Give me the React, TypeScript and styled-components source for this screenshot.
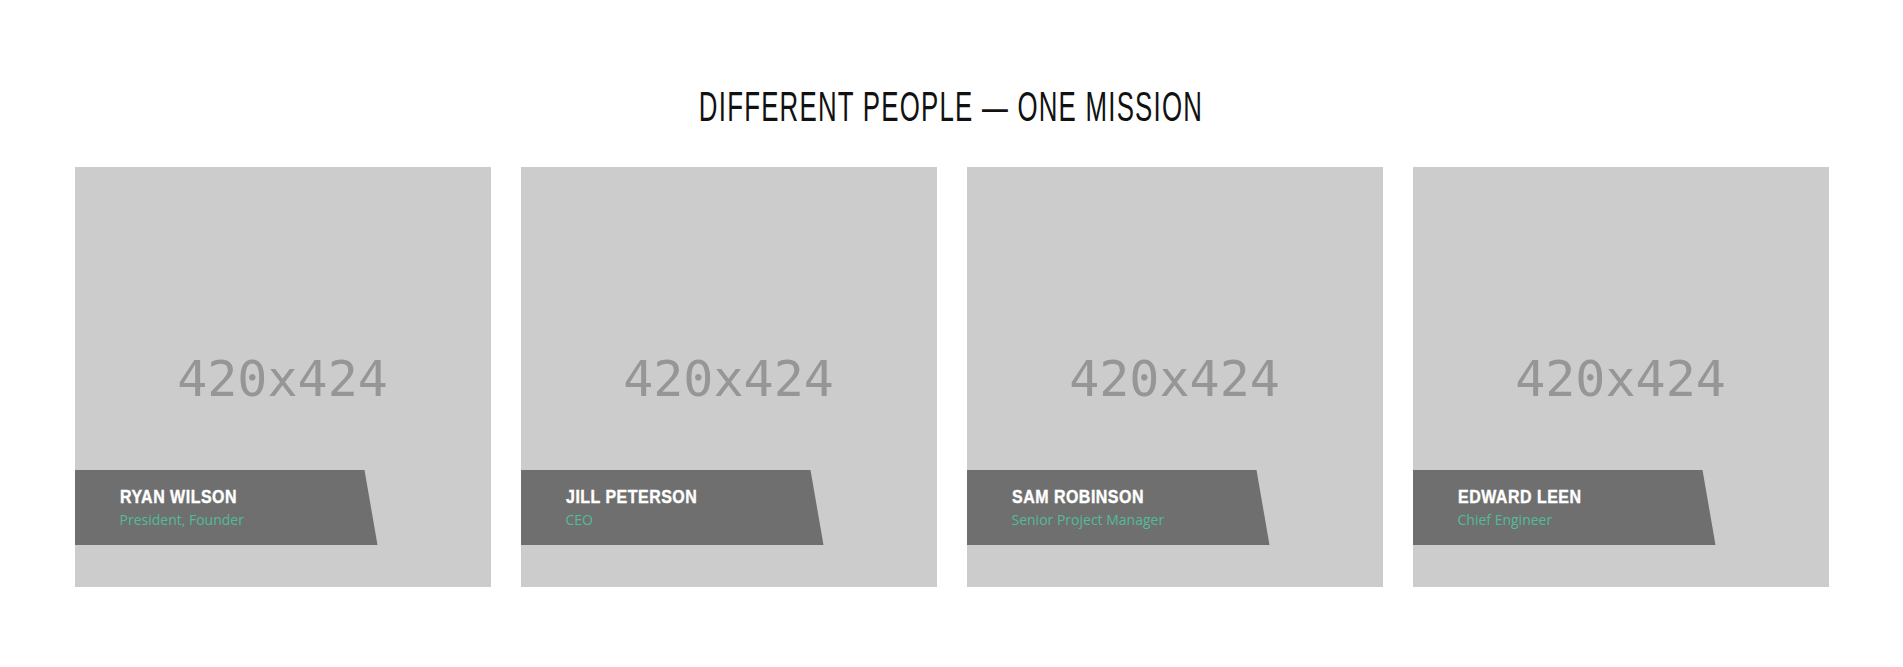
import React from 'react';
import { styled, createGlobalStyle } from 'styled-components';

const GlobalStyle = createGlobalStyle`
    * { box-sizing: border-box; }
    body {
        margin: 0;
        background: #ffffff;
        font-family: "Open Sans", sans-serif;
    }
`

type Member = {
    name: string,
    position: string,
}

const team: Member[] = [
    { name: 'Ryan Wilson', position: 'President, Founder' },
    { name: 'Jill Peterson', position: 'CEO' },
    { name: 'Sam Robinson', position: 'Senior Project Manager' },
    { name: 'Edward Leen', position: 'Chief Engineer' },
];

const App: React.FC = () => {
    return (
        <Section>
            <GlobalStyle />
            <Title><span>Different people — one mission</span></Title>
            <Grid>
                {team.map((m) => (
                    <Card key={m.name}>
                        <Placeholder>420x424</Placeholder>
                        <Ribbon>
                            <Name><span>{m.name}</span></Name>
                            <Position>{m.position}</Position>
                        </Ribbon>
                    </Card>
                ))}
            </Grid>
        </Section>
    );
};

export default App;

const Section = styled.section`
    padding: 90px 0 80px;
`
const Title = styled.h2`
    margin: 0 0 43px;
    text-align: center;
    font-family: "Liberation Sans", sans-serif;
    font-weight: 400;
    font-size: 42px;
    line-height: 34px;
    text-transform: uppercase;
    color: #111;

    span {
        display: inline-block;
        transform: scaleX(0.615);
        letter-spacing: 2px;
        white-space: nowrap;
    }
`
const Grid = styled.div`
    width: 1754px;
    margin: 0 auto;
    display: grid;
    grid-template-columns: repeat(4, 416px);
    gap: 30px;
`
const Card = styled.div`
    position: relative;
    height: 420px;
    background: #cccccc;
    display: flex;
    align-items: center;
    justify-content: center;
`
const Placeholder = styled.span`
    margin-top: 4px;
    font-family: "DejaVu Sans Mono", monospace;
    font-size: 50px;
    color: #969696;
`
const Ribbon = styled.div`
    position: absolute;
    left: 0;
    bottom: 42px;
    width: 303px;
    height: 75px;
    padding: 17px 0 0 45px;
    background: #6f6f6f;
    clip-path: polygon(0 0, 290px 0, 100% 100%, 0 100%);
`
const Name = styled.div`
    font-family: "Liberation Sans", sans-serif;
    font-weight: 700;
    font-size: 19px;
    line-height: 20px;
    text-transform: uppercase;
    color: #ffffff;

    span {
        display: inline-block;
        transform: scaleX(0.84);
        transform-origin: left center;
        letter-spacing: 0.6px;
        white-space: nowrap;
        -webkit-text-stroke: 0.4px #ffffff;
    }
`
const Position = styled.div`
    margin-top: 4px;
    font-family: "Open Sans", sans-serif;
    font-size: 14px;
    line-height: 18px;
    color: #52bb9b;
`
